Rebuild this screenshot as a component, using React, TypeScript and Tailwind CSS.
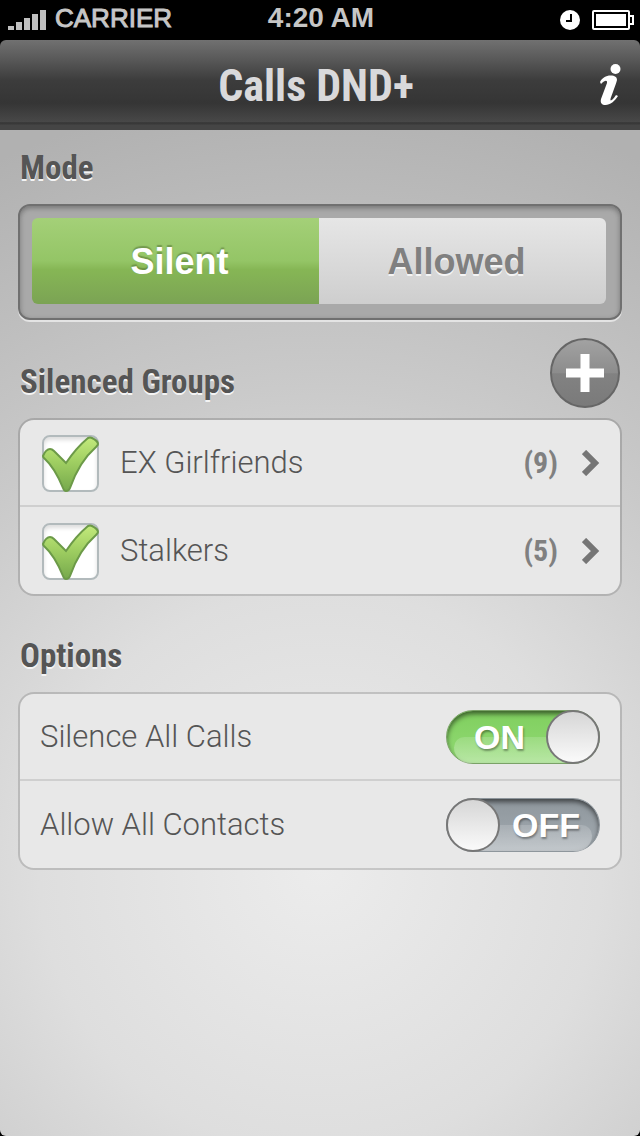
import React, {useState} from 'react'

const CONDENSED = "font-['Roboto_Condensed','Liberation_Sans_Narrow','Liberation_Sans',sans-serif]"
const LABEL = "font-['Roboto','Liberation_Sans',sans-serif] font-light text-[31px] leading-10 text-[#555]"

function StatusBar() {
    return (
        <div className="grid grid-cols-3 items-center h-10 pl-2 pr-1.5 bg-black text-[#c6c6c6] font-['Liberation_Sans',sans-serif]">
            <div className="flex items-center gap-2">
                <svg width="39" height="20" viewBox="0 0 39 20" fill="#c0c0c0" aria-hidden="true">
                    <path d="M0 16h6v4H0zM8 12h6v8H8zM16 8h6v12h-6zM24 4h6v16h-6zM32 0h6v20h-6z"/>
                </svg>
                <span className="pb-1 text-[26px] leading-9 [-webkit-text-stroke:1px_#c6c6c6]">CARRIER</span>
            </div>
            <div className="pb-1 text-center font-bold text-[28px] leading-9">4:20 AM</div>
            <div className="flex items-center justify-end gap-3">
                <svg width="20" height="20" viewBox="0 0 20 20" aria-hidden="true">
                    <circle cx="10" cy="10" r="10" fill="#fff"/>
                    <path d="M11 4v7H6" stroke="#000" strokeWidth="2" fill="none"/>
                </svg>
                <svg width="42" height="20" viewBox="0 0 42 20" fill="none" aria-hidden="true">
                    <rect x="1" y="1" width="36" height="18" rx="1" stroke="#fff" strokeWidth="2"/>
                    <rect x="4" y="4" width="30" height="12" fill="#fff"/>
                    <path d="M38 6h3v8h-3" stroke="#fff" strokeWidth="2"/>
                </svg>
            </div>
        </div>
    )
}

function Header() {
    return (
        <header className="grid grid-cols-[1fr_auto_1fr] items-center h-[90px] pl-2 pr-4 rounded-t-md bg-[linear-gradient(#717171,#585858_22%,#3c3c3c_45%,#353535_70%,#484848_91%,#343434_92%,#454545_95%,#454545)]">
            <h1 className={`col-start-2 pt-0.5 ${CONDENSED} font-bold text-[44px] leading-[48px] text-[#d9d9db]`}>Calls DND+</h1>
            <button aria-label="Info" className="justify-self-end">
                <svg width="28" height="44" viewBox="0 0 28 44" fill="#fff" className="block">
                    <circle cx="19.5" cy="6" r="5"/>
                    <path d="M4 19C6 15 10 12.500 14.500 12.500C19 12.500 21 14 21 17C20 21 15 34 14.500 36C14 38.500 16 38 20 32L22 33C19 38 14 42 9.500 42C6 42 4 40 5 36L11 20C11.500 17 9 17 5 21Z"/>
                </svg>
            </button>
        </header>
    )
}

function SectionTitle({children, action}: {children: string, action?: React.ReactNode}) {
    return (
        <div className="flex items-end justify-between px-0.5 pb-[10px]">
            <h2 className={`mb-[6px] ${CONDENSED} font-bold text-[33px] leading-10 text-[#555] [text-shadow:0_2px_0_#f4f4f4]`}>{children}</h2>
            {action}
        </div>
    )
}

function Card({children}: {children: React.ReactNode}) {
    return (
        <ul className="rounded-2xl border-2 border-black/15 bg-[#e8e8e8] bg-clip-padding divide-y-2 divide-[#cfcfcf]">
            {children}
        </ul>
    )
}

function GroupRow({id, name, count}: {id: string, name: string, count: number}) {
    return (
        <li className="flex items-center min-h-[87px] pl-[22px] pr-5">
            <span className="grid mt-0.5 mr-[21px]">
                <input id={id} type="checkbox" defaultChecked
                    className="peer [grid-area:1/1] appearance-none size-[57px] rounded-lg border-2 border-[#b2babc] bg-white shadow-[inset_0_3px_4px_#ddd]"/>
                <svg width="57" height="57" viewBox="0 0 57 57" className="[grid-area:1/1] invisible peer-checked:visible pointer-events-none" aria-hidden="true">
                    <defs>
                        <linearGradient id={`${id}-fill`} x1="0" y1="0" x2="0" y2="1">
                            <stop offset="0" stopColor="#c3ea7c"/>
                            <stop offset="0.45" stopColor="#a0cf62"/>
                            <stop offset="1" stopColor="#76a94c"/>
                        </linearGradient>
                    </defs>
                    <path d="M1 21Q4 14 8 14Q10 14 12 16L24 28Q34 13 46 3Q48 2 50 3Q56 6 56 9Q56 10 54 12Q37 27 28 53Q27 56 24 56Q22 56 21 53Q13 33 2 23Q1 22 1 21Z"
                        fill={`url(#${id}-fill)`} stroke="#6c9a48" strokeWidth="2"/>
                </svg>
            </span>
            <label htmlFor={id} className={`flex-1 ${LABEL}`}>{name}</label>
            <a href={`#${id}`} className={`flex items-center gap-6 ${CONDENSED} font-bold text-[30px] leading-10 text-[#808080]`}>
                <span>({count})</span>
                <svg width="18" height="26" viewBox="0 0 18 26" fill="none" aria-hidden="true">
                    <path d="M2 2L13 13L2 24" stroke="#757575" strokeWidth="6"/>
                </svg>
            </a>
        </li>
    )
}

function OptionRow({id, name, initial}: {id: string, name: string, initial: boolean}) {
    const [on, setOn] = useState(initial)
    return (
        <li className="flex items-center justify-between min-h-[87px] px-5">
            <label htmlFor={id} className={LABEL}>{name}</label>
            <span className="grid">
                <input id={id} type="checkbox" role="switch" checked={on} onChange={() => setOn(!on)}
                    className="[grid-area:1/1] appearance-none w-[154px] h-[54px] rounded-full border border-[#8e969c] bg-[linear-gradient(#8f979d,#a2aab0)] shadow-[inset_0_3px_5px_rgba(0,0,0,.55)] checked:border-[#7aa267] checked:bg-[linear-gradient(#80cf5f,#92da74)]"/>
                {/* gloss */}
                <span className="[grid-area:1/1] self-end h-[26px] mx-2 mb-px rounded-t-2xl rounded-b-3xl bg-linear-to-b from-white/15 to-white/35 pointer-events-none"/>
                <span className={`[grid-area:1/1] flex items-center justify-between pointer-events-none ${on ? 'flex-row-reverse' : ''}`}>
                    <span className="size-[54px] rounded-full border-2 border-[#777] bg-[linear-gradient(#d6d6d6,#fafafa)]"/>
                    <span className={`font-['Liberation_Sans',sans-serif] font-bold text-[34px] leading-10 text-white [text-shadow:1px_2px_2px_rgba(0,0,0,.35)] ${on ? 'pl-7 pr-5' : 'pl-3 pr-5'}`}>
                        {on ? 'ON' : 'OFF'}
                    </span>
                </span>
            </span>
        </li>
    )
}

export default function App(): React.ReactElement {
    const [mode, setMode] = useState('Silent')
    return (
        <div className="flex flex-col min-h-screen bg-black">
            <StatusBar/>
            <Header/>
            <main className="flex-1 px-[18px] pt-[18px] pb-8 rounded-b-md bg-[radial-gradient(circle_780px_at_50%_740px,#ececec,#dedede_36%,#cacaca_62%,#b1b1b1)]">
                <section>
                    <SectionTitle>Mode</SectionTitle>
                    <div className="grid grid-cols-2 pt-3 pl-3 pr-[14px] pb-[14px] rounded-xl border-2 border-[#707070] bg-[#a9a9a9] shadow-[0_2px_0_#e4e4e4,inset_0_2px_5px_#777]">
                        {['Silent', 'Allowed'].map(name => (
                            <button key={name} aria-pressed={mode === name} onClick={() => setMode(name)}
                                className={`h-[86px] pt-0.5 first:pl-2 last:pr-3 first:rounded-l-md last:rounded-r-md font-['Liberation_Sans',sans-serif] font-bold text-[36px] ${mode === name
                                    ? 'text-white [text-shadow:0_-2px_1px_rgba(80,110,50,.5)] bg-[linear-gradient(#a4d078,#94c566_50%,#86b655_60%,#7ba354)]'
                                    : 'text-[#808080] [text-shadow:0_2px_0_#f4f4f4] bg-[linear-gradient(#e6e6e6,#dadada_50%,#cecece)]'}`}>
                                {name}
                            </button>
                        ))}
                    </div>
                </section>
                <section className="pt-[18px]">
                    <SectionTitle action={
                        <button aria-label="Add group" className="grid place-items-center size-[70px] rounded-full border-2 border-[#666] bg-[linear-gradient(#a2a2a2,#8c8c8c_50%,#828282_51%,#7a7a7a)]">
                            <svg width="38" height="38" viewBox="0 0 38 38" aria-hidden="true">
                                <path d="M19 0v38M0 19h38" stroke="#fff" strokeWidth="9"/>
                            </svg>
                        </button>
                    }>Silenced Groups</SectionTitle>
                    <Card>
                        <GroupRow id="ex-girlfriends" name="EX Girlfriends" count={9}/>
                        <GroupRow id="stalkers" name="Stalkers" count={5}/>
                    </Card>
                </section>
                <section className="pt-10">
                    <SectionTitle>Options</SectionTitle>
                    <Card>
                        <OptionRow id="silence-all" name="Silence All Calls" initial={true}/>
                        <OptionRow id="allow-contacts" name="Allow All Contacts" initial={false}/>
                    </Card>
                </section>
            </main>
        </div>
    )
}
